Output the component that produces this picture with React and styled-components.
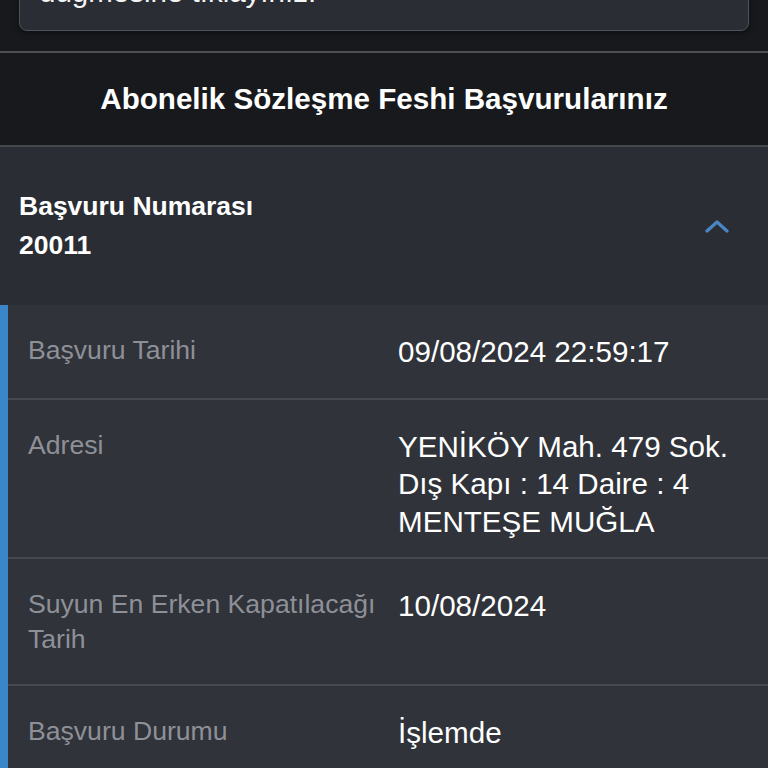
import React from 'react';
import styled, { createGlobalStyle } from 'styled-components';

const GlobalStyle = createGlobalStyle`
  html, body {
    margin: 0;
    padding: 0;
    background: #18191c;
  }
  body {
    font-family: "Liberation Sans", Arial, Helvetica, sans-serif;
    color: #ffffff;
  }
`;

const Screen = styled.div`
  height: 100vh;
  overflow: hidden;
  background: #18191c;
`;

// page is scrolled: only the bottom of the info card is still visible
const NoticeWrap = styled.div`
  margin-top: -86px;
  padding: 0 19px 20px;
`;

const Notice = styled.div`
  background: #2a2d34;
  border: 1px solid #4f525a;
  border-radius: 8px;
  padding: 20px 20px 20px 19px;
  font-size: 29.5px;
  line-height: 37.5px;
  color: #f4f4f5;
  box-shadow: 0 2px 6px rgba(0, 0, 0, 0.45);
`;

const SectionTitle = styled.h2`
  margin: 0;
  height: 92px;
  display: flex;
  align-items: center;
  justify-content: center;
  border-top: 2px solid #4c4e54;
  border-bottom: 2px solid #46484e;
  font-size: 29.6px;
  font-weight: 700;
  color: #ffffff;
`;

const AccordionHeader = styled.div`
  display: flex;
  align-items: center;
  justify-content: space-between;
  padding: 40px 39px 40px 19px;
  background: #2a2d34;
`;

const HeaderText = styled.div`
  font-size: 26.5px;
  font-weight: 700;
  line-height: 39px;
  color: #ffffff;
`;

const Chevron = styled.svg`
  width: 24px;
  height: 14px;
  flex-shrink: 0;
`;

const Details = styled.div`
  border-left: 8px solid #3b86c9;
  background: #30333a;
`;

const Row = styled.div`
  display: grid;
  grid-template-columns: 380px 1fr;
  border-bottom: 2px solid #45484f;
`;

const Label = styled.div`
  padding: 28px 10px 27px 20px;
  font-size: 26.6px;
  line-height: 35px;
  color: #8e9097;
`;

const Value = styled.div`
  padding: 28px 10px ${(p) => (p.$compact ? '17px' : '27px')};
  font-size: 29.6px;
  line-height: 37.5px;
  color: #ffffff;
`;

const rows = [
  { label: 'Başvuru Tarihi', value: ['09/08/2024 22:59:17'] },
  {
    label: 'Adresi',
    value: ['YENİKÖY Mah. 479 Sok.', 'Dış Kapı : 14 Daire : 4', 'MENTEŞE MUĞLA'],
    compact: true,
  },
  { label: 'Suyun En Erken Kapatılacağı Tarih', value: ['10/08/2024'] },
  { label: 'Başvuru Durumu', value: ['İşlemde'] },
];

export default function App() {
  return (
    <Screen>
      <GlobalStyle />
      <NoticeWrap>
        <Notice>
          Yeni başvuru için "Başvuru Yap"
          <br />
          düğmesine tıklayınız.
        </Notice>
      </NoticeWrap>

      <SectionTitle>Abonelik Sözleşme Feshi Başvurularınız</SectionTitle>

      <AccordionHeader>
        <HeaderText>
          Başvuru Numarası
          <br />
          20011
        </HeaderText>
        <Chevron viewBox="0 0 24 14">
          <polyline
            points="2,12 12,3 22,12"
            fill="none"
            stroke="#4a86c5"
            strokeWidth="3.2"
            strokeLinecap="round"
            strokeLinejoin="round"
          />
        </Chevron>
      </AccordionHeader>

      <Details>
        {rows.map((r) => (
          <Row key={r.label}>
            <Label>{r.label}</Label>
            <Value $compact={r.compact}>
              {r.value.map((line, i) => (
                <div key={i}>{line}</div>
              ))}
            </Value>
          </Row>
        ))}
      </Details>
    </Screen>
  );
}
